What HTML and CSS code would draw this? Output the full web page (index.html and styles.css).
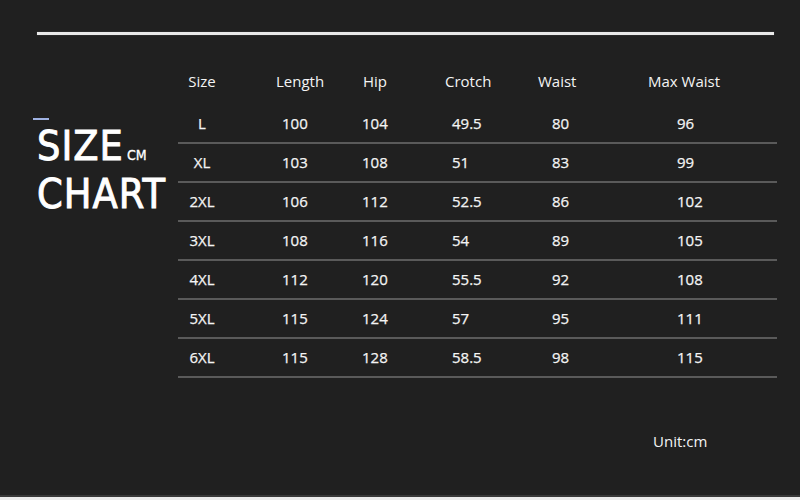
FILE: index.html
```html
<!DOCTYPE html>
<html>
<head>
<meta charset="utf-8">
<link rel="stylesheet" href="styles.css">
</head>
<body>
<div class="page">
  <div class="rule"></div>
  <div class="main">
    <div class="logo">
      <div class="dash"></div>
      <div class="logo-line">SIZE<span class="cm">CM</span></div>
      <div class="logo-line">CHART</div>
    </div>
    <div class="chart">
      <div class="row head">
        <span class="c1">Size</span><span class="c2">Length</span><span class="c3">Hip</span><span class="c4">Crotch</span><span class="c5">Waist</span><span class="c6">Max Waist</span>
      </div>
      <div class="row data"><span class="c1">L</span><span class="c2">100</span><span class="c3">104</span><span class="c4">49.5</span><span class="c5">80</span><span class="c6">96</span></div>
      <div class="row data"><span class="c1">XL</span><span class="c2">103</span><span class="c3">108</span><span class="c4">51</span><span class="c5">83</span><span class="c6">99</span></div>
      <div class="row data"><span class="c1">2XL</span><span class="c2">106</span><span class="c3">112</span><span class="c4">52.5</span><span class="c5">86</span><span class="c6">102</span></div>
      <div class="row data"><span class="c1">3XL</span><span class="c2">108</span><span class="c3">116</span><span class="c4">54</span><span class="c5">89</span><span class="c6">105</span></div>
      <div class="row data"><span class="c1">4XL</span><span class="c2">112</span><span class="c3">120</span><span class="c4">55.5</span><span class="c5">92</span><span class="c6">108</span></div>
      <div class="row data"><span class="c1">5XL</span><span class="c2">115</span><span class="c3">124</span><span class="c4">57</span><span class="c5">95</span><span class="c6">111</span></div>
      <div class="row data"><span class="c1">6XL</span><span class="c2">115</span><span class="c3">128</span><span class="c4">58.5</span><span class="c5">98</span><span class="c6">115</span></div>
      <div class="unit">Unit:cm</div>
    </div>
  </div>
  <div class="footer"></div>
</div>
</body>
</html>
```

FILE: styles.css
```css
html, body {
  margin: 0;
  padding: 0;
  background: #202020;
}

.page {
  width: 800px;
  height: 500px;
  display: flex;
  flex-direction: column;
  background: #202020;
  color: #f4f4f4;
  font-family: "Open Sans", "Noto Sans", sans-serif;
  overflow: hidden;
}

.rule {
  margin: 32px 0 0 37px;
  width: 737px;
  height: 3px;
  background: #e9e9e9;
  box-shadow: 0 0 1px #888;
}

.main {
  display: flex;
  margin-top: 22px;
}

.logo {
  width: 145px;
  padding-left: 33px;
  padding-top: 61px;
  font-family: "DejaVu Sans Condensed", "DejaVu Sans", sans-serif;
  font-stretch: condensed;
  font-weight: 400;
  color: #ffffff;
}

.dash {
  width: 16px;
  height: 2px;
  background: #9fb2e2;
  margin-bottom: 7px;
}

.logo-line {
  font-size: 41px;
  line-height: 39px;
  padding-left: 4px;
  letter-spacing: 1px;
  white-space: nowrap;
  -webkit-text-stroke: 0.9px #ffffff;
}

.cm {
  font-size: 14px;
  letter-spacing: 0;
  color: #ffffff;
  -webkit-text-stroke: 0.3px #ffffff;
  margin-left: 3px;
}

.chart {
  width: 599px;
}

.row {
  display: grid;
  grid-template-columns: 48px 129px 85px 90px 110px 137px;
  font-size: 15px;
  font-weight: 400;
  white-space: nowrap;
}

.row.head {
  height: 48px;
  line-height: 48px;
}

.row.data {
  height: 37px;
  line-height: 37px;
  border-bottom: 2px solid #5a5a5a;
  -webkit-text-stroke: 0.25px #f4f4f4;
}

.c1 { text-align: center; }

.head .c2 { padding-left: 50px; }
.head .c3 { padding-left: 8px; }
.head .c4 { padding-left: 5px; }
.head .c5 { padding-left: 8px; }
.head .c6 { padding-left: 8px; }

.data .c2 { padding-left: 56px; }
.data .c3 { padding-left: 7px; }
.data .c4 { padding-left: 12px; }
.data .c5 { padding-left: 22px; }
.data .c6 { padding-left: 37px; }

.unit {
  margin-top: 53px;
  margin-left: 475px;
  font-size: 15px;
  line-height: 20px;
}

.footer {
  margin-top: auto;
  height: 3px;
  border-top: 2px solid #383838;
  background: #ebebeb;
}
```
